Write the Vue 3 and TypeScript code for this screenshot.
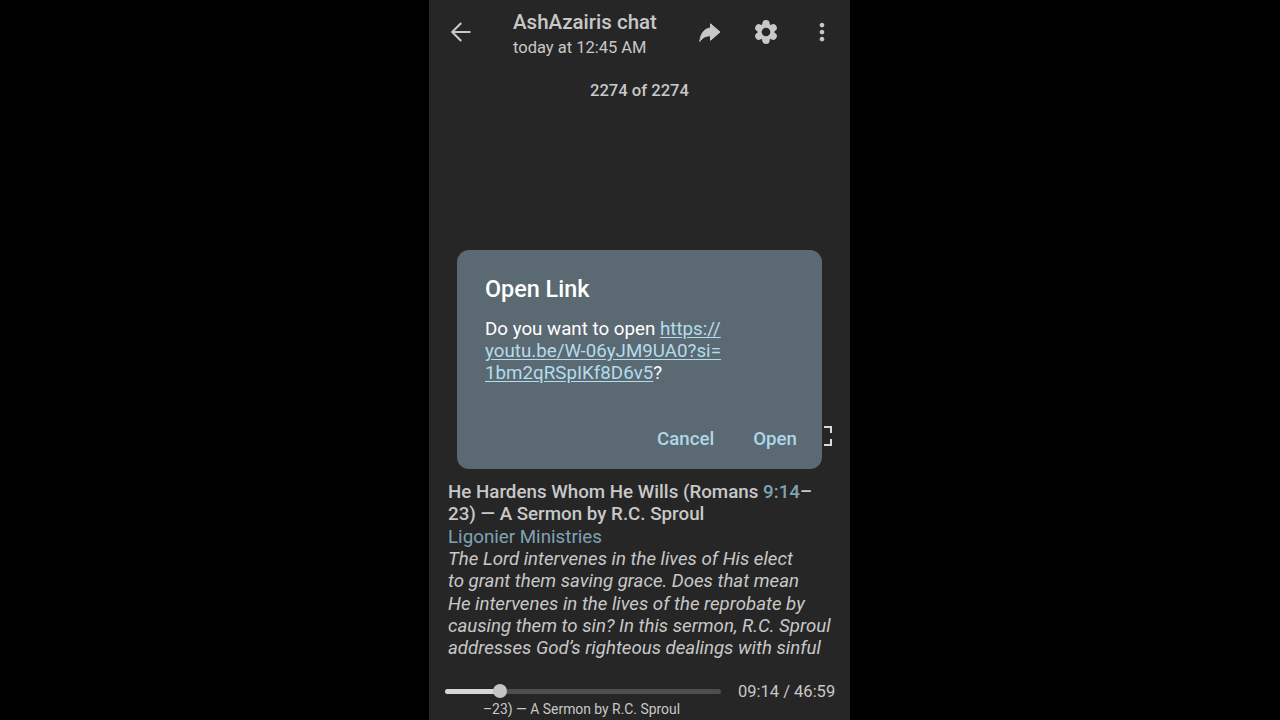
<script setup lang="ts">
const body: string[] = [
  'The Lord intervenes in the lives of His elect',
  'to grant them saving grace. Does that mean',
  'He intervenes in the lives of the reprobate by',
  'causing them to sin? In this sermon, R.C. Sproul',
  'addresses God’s righteous dealings with sinful',
]
const progress = 20
const lobes: number[] = [0, 60, 120, 180, 240, 300]
</script>

<template>
  <div class="phone">
    <header class="bar">
      <svg class="back" width="24" height="24" viewBox="0 0 24 24"><path d="M21.500 12H3.500M12.200 3 3.200 12l9 9" fill="none" stroke="currentColor" stroke-width="2.100" /></svg>
      <div class="heading">
        <div class="title">AshAzairis chat</div>
        <div class="sub">today at 12:45 AM</div>
      </div>
      <div class="actions">
        <span class="slot">
          <svg width="24" height="24" viewBox="0 0 24 24"><path d="M22 12 12.500 3.800V8C6.500 8.500 2.800 13 1.800 21.500 4.500 17.500 8 15.800 12.500 15.800V20.300Z" fill="currentColor" stroke="currentColor" stroke-width="1" stroke-linejoin="round" /></svg>
        </span>
        <span class="slot">
          <svg width="26" height="26" viewBox="0 0 26 26">
            <circle cx="13" cy="13" r="8.500" fill="currentColor" />
            <circle v-for="a in lobes" :key="a" cx="13" cy="4.800" r="3.700" fill="currentColor" :transform="`rotate(${a} 13 13)`" />
            <circle cx="13" cy="13" r="4.300" fill="#262626" />
          </svg>
        </span>
        <span class="slot">
          <svg width="28" height="28" viewBox="0 0 24 24"><path d="M12 8c1.100 0 2-.9 2-2s-.9-2-2-2-2 .9-2 2 .9 2 2 2zm0 2c-1.100 0-2 .9-2 2s.9 2 2 2 2-.9 2-2-.9-2-2-2zm0 6c-1.100 0-2 .9-2 2s.9 2 2 2 2-.9 2-2-.9-2-2-2z" fill="currentColor" /></svg>
        </span>
      </div>
    </header>

    <div class="count">2274 of 2274</div>

    <main class="content">
      <div class="video-title">He Hardens Whom He Wills (Romans <span class="ref">9:14</span>–<br />23) — A Sermon by R.C. Sproul</div>
      <div class="channel">Ligonier Ministries</div>
      <p v-for="line in body" :key="line" class="line">{{ line }}</p>
    </main>

    <footer class="player">
      <div class="seek">
        <div class="track"><div class="fill" :style="{ width: progress + '%' }"><span class="thumb"></span></div></div>
        <div class="time">09:14 / 46:59</div>
      </div>
      <div class="caption">–23) — A Sermon by R.C. Sproul</div>
    </footer>

    <svg class="fullscreen" width="10" height="20" viewBox="0 0 10 20"><path d="M1 1h7v6M8 13v6H1" fill="none" stroke="currentColor" stroke-width="2" /></svg>

    <section class="dialog">
      <h2 class="dialog-title">Open Link</h2>
      <p class="dialog-text">Do you want to open <a class="link">https://</a><br /><a class="link">youtu.be/W-06yJM9UA0?si=</a><br /><a class="link">1bm2qRSpIKf8D6v5</a>?</p>
      <div class="dialog-actions">
        <span>Cancel</span>
        <span>Open</span>
      </div>
    </section>
  </div>
</template>

<style>
html, body { margin: 0; background: #000; }
</style>

<style scoped>
.phone {
  position: relative;
  width: 421px;
  height: 720px;
  margin-left: 429px;
  background: #262626;
  color: #c8c8c8;
  font-family: Roboto, "Liberation Sans", sans-serif;
  overflow: hidden;
  display: flex;
  flex-direction: column;
}
.bar {
  display: flex;
  align-items: center;
  height: 64px;
  flex: none;
}
.back { margin-left: 20px; flex: none; }
.heading { margin-left: 40px; flex: 1; margin-top: 5px; }
.title { font-size: 20.500px; font-weight: 500; line-height: 26px; }
.sub { font-size: 16.500px; line-height: 26px; }
.actions {
  display: flex;
  align-items: center;
}
.slot {
  width: 56px;
  height: 32px;
  display: flex;
  align-items: center;
  justify-content: center;
}
.count {
  font-size: 16.600px;
  font-weight: 500;
  line-height: 22px;
  text-align: center;
  margin-top: 16px;
}
.content {
  margin-top: 379.200px;
  padding: 0 18px 0 19px;
  font-size: 18.750px;
  line-height: 22.300px;
  flex: 1;
}
.video-title { font-weight: 500; }
.ref, .channel { color: #7fa3b4; }
.line { margin: 0; font-size: 18.650px; font-style: italic; white-space: nowrap; }
.player { flex: none; height: 44px; box-sizing: border-box; padding: 3px 14px 0 16px; }
.seek { display: flex; align-items: center; height: 24px; }
.track {
  width: 276px;
  height: 5px;
  border-radius: 3px;
  background: #4e4e4e;
}
.fill {
  position: relative;
  height: 100%;
  border-radius: 3px;
  background: #d6d6d6;
}
.thumb {
  position: absolute;
  right: -7px;
  top: -4.500px;
  width: 14px;
  height: 14px;
  border-radius: 50%;
  background: #c4c4c4;
}
.time { margin-left: 17px; font-size: 16.500px; white-space: nowrap; }
.caption { font-size: 13.900px; line-height: 18px; margin: -3.500px 0 0 38px; white-space: nowrap; }
.fullscreen { position: absolute; left: 394px; top: 426px; color: #d8d8d8; }
.dialog {
  position: absolute;
  left: 28px;
  top: 250px;
  width: 365px;
  height: 219px;
  box-sizing: border-box;
  padding: 25px 25px 0 28px;
  border-radius: 12px;
  background: #5b6972;
  color: #fff;
  display: flex;
  flex-direction: column;
}
.dialog-title { margin: 0; font-size: 23.400px; font-weight: 500; line-height: 28px; }
.dialog-text { margin: 15px 0 0; font-size: 18.750px; line-height: 22.200px; }
.link { color: #b3dcec; text-decoration: underline; text-underline-offset: 2px; }
.dialog-actions {
  margin-top: auto;
  height: 60px;
  display: flex;
  justify-content: flex-end;
  gap: 39px;
  color: #aed8e8;
  font-size: 18.700px;
  font-weight: 500;
  line-height: 60px;
}
</style>
